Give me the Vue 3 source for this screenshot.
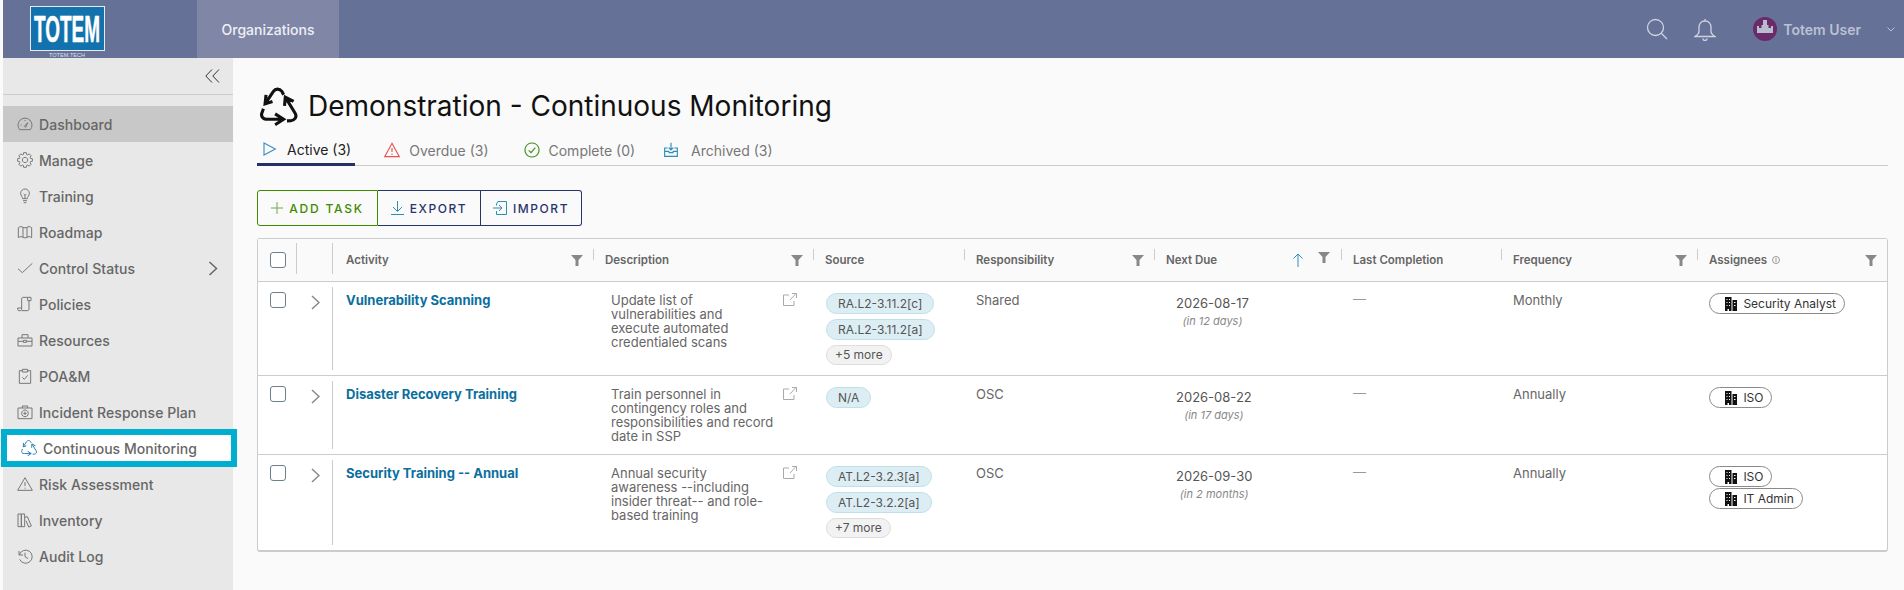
<script setup>
// 齿轮图标的轮廓按齿数算出来
const gearPath = () => {
  const pts = []
  for (let i = 0; i < 8; i++) {
    const a = (i / 8) * Math.PI * 2
    for (const [r, o] of [[8.6, -0.3], [11.2, -0.18], [11.2, 0.18], [8.6, 0.3]]) {
      pts.push((12 + r * Math.cos(a + o)).toFixed(1) + ' ' + (12 + r * Math.sin(a + o)).toFixed(1))
    }
  }
  return 'M' + pts.join('L') + 'zM12 8a4 4 0 1 0 .01 0z'
}

const icons = {
  gauge: 'M4 20.500A10.500 10.500 0 1 1 20 20.500zM11 15.500l5-5.500 -3 7zM5.500 13.500h1.500M12 6v1.500',
  gear: gearPath(),
  bulb: 'M8.500 16c0-3-3-4-3-8a6.500 6.500 0 0 1 13 0c0 4-3 5-3 8zM9 19h6M10 22h4M12 16v-5M10 9l2 2 2-2',
  map: 'M2 5.500c3-2 5-2 7-.5 1.500 1 4.500 1 6 0 2-1.500 4-1.500 7 .5v15c-3-2-5-2-7-.5-1.500 1-4.500 1-6 0-2-1.500-4-1.500-7 .5zM9 5v15M15 5v15',
  check: 'M1.500 13l6.500 6L23 5',
  scroll: 'M7 18V4c0-1.500 1-2 2-2h12v5h-5V3M7 18v2c0 1.500-1 2-2 2H3c-1 0-2-1-2-2v-2h6M7 22h9c1 0 2-1 2-2V7',
  case: 'M1.500 9h21v12h-21zM7.500 9V4h9v5M1.500 14h8M14.500 14h8M9.500 12.500h5v3h-5z',
  clip: 'M8 4H3.500v19h17V4H16M8 2h8v4H8zM8 14l3 3 5-6',
  camera: 'M1.500 6h21v16h-21zM8 6V3h8v3M12 9a5 5 0 1 0 .01 0zM12 11.500v5M9.500 14h5',
  recycle: 'M3.300 10.300 8.700 2.200C10 .3 12.600 .2 14.200 2.200L15.300 4.400M3.900 4.400 3.300 10.300 8.100 8.700M16.400 5.900 22.800 16.400C24.200 18.800 22.500 21 20 21.200L17.500 21.300M15.900 11.600 16.400 5.900 21.800 8.700M15.300 20.300H5C1.500 20.300 .2 18 1.500 15.500L2.200 13.500M9.800 16.800l5.500 3.500-5.500 3.500',
  warn: 'M12 2.500 23 21.500H1zM12 9v6M12 17.500v1.500',
  books: 'M1.500 3h5v19h-5zM6.500 3h5v19h-5zM11.500 8l4-1 6 14-4 1.500-4-9.500',
  history: 'M3 4.500v6h6M3.500 10.500A9.800 9.800 0 1 1 4 17M12 7v6l4.500 3'
}

const navItems = [
  { label: 'Dashboard', icon: 'gauge', active: true },
  { label: 'Manage', icon: 'gear' },
  { label: 'Training', icon: 'bulb' },
  { label: 'Roadmap', icon: 'map' },
  { label: 'Control Status', icon: 'check', more: true },
  { label: 'Policies', icon: 'scroll' },
  { label: 'Resources', icon: 'case' },
  { label: 'POA&M', icon: 'clip' },
  { label: 'Incident Response Plan', icon: 'camera' },
  { label: 'Continuous Monitoring', icon: 'recycle', marked: true },
  { label: 'Risk Assessment', icon: 'warn' },
  { label: 'Inventory', icon: 'books' },
  { label: 'Audit Log', icon: 'history' }
]

const tabs = [
  { label: 'Active (3)', cls: 'active', d: 'M3 3l17 9-17 9z', color: '#3d8fbf' },
  { label: 'Overdue (3)', cls: 'overdue', d: 'M12 2 23 22H1zM12 9v6M12 17.500v2', color: '#e8534a' },
  { label: 'Complete (0)', cls: 'complete', d: 'M12 1.500a10.500 10.500 0 1 0 .01 0zM7 12.500l3.500 3.500L17 8.500', color: '#3f8f1f' },
  { label: 'Archived (3)', cls: 'archived', d: 'M7 9H2.500v12.500h19V9H17M12 1v11M8.500 8.500 12 12l3.500-3.500M2.500 14h6.500M15 14h6.500M9 14v2h6v-2', color: '#2d8cb8' }
]

const columns = [
  { key: 'activity', label: 'Activity', filter: true },
  { key: 'description', label: 'Description', filter: true },
  { key: 'source', label: 'Source' },
  { key: 'responsibility', label: 'Responsibility', filter: true },
  { key: 'due', label: 'Next Due', filter: true, sorted: true },
  { key: 'last', label: 'Last Completion' },
  { key: 'frequency', label: 'Frequency', filter: true },
  { key: 'assignees', label: 'Assignees', filter: true, info: true }
]

const rows = [
  {
    id: 1,
    activity: 'Vulnerability Scanning',
    description: ['Update list of', 'vulnerabilities and', 'execute automated', 'credentialed scans'],
    source: ['RA.L2-3.11.2[c]', 'RA.L2-3.11.2[a]'],
    more: '+5 more',
    responsibility: 'Shared',
    due: '2026-08-17',
    dueIn: '(in 12 days)',
    frequency: 'Monthly',
    assignees: ['Security Analyst'],
    height: 94
  },
  {
    id: 2,
    activity: 'Disaster Recovery Training',
    description: ['Train personnel in', 'contingency roles and', 'responsibilities and record', 'date in SSP'],
    source: ['N/A'],
    responsibility: 'OSC',
    due: '2026-08-22',
    dueIn: '(in 17 days)',
    frequency: 'Annually',
    assignees: ['ISO'],
    height: 79
  },
  {
    id: 3,
    activity: 'Security Training -- Annual',
    description: ['Annual security', 'awareness --including', 'insider threat-- and role-', 'based training'],
    source: ['AT.L2-3.2.3[a]', 'AT.L2-3.2.2[a]'],
    more: '+7 more',
    responsibility: 'OSC',
    due: '2026-09-30',
    dueIn: '(in 2 months)',
    frequency: 'Annually',
    assignees: ['ISO', 'IT Admin'],
    height: 95
  }
]
</script>

<template>
  <div class="app">
    <header class="topbar">
      <div class="brand">
        <svg width="76" height="52" viewBox="0 0 76 52">
          <rect x="0.500" y="0.500" width="74" height="44" fill="#1272ad" stroke="#e6ebf2" />
          <text x="37" y="35.500" text-anchor="middle" textLength="66" lengthAdjust="spacingAndGlyphs" class="logo-big">TOTEM</text>
          <text x="37" y="51" text-anchor="middle" textLength="36" lengthAdjust="spacingAndGlyphs" class="logo-small">TOTEM.TECH</text>
        </svg>
      </div>
      <a class="org-tab">Organizations</a>
      <div class="top-actions">
        <svg class="top-icon search" width="22" height="22" viewBox="0 0 22 22">
          <circle cx="9.500" cy="9.500" r="8" />
          <path d="M15 15l6 6" />
        </svg>
        <svg class="top-icon bell" width="22" height="23" viewBox="0 0 22 23">
          <path d="M11 3c-4 0-6 3-6 6.500v4c0 2-1.500 3.500-4 5h20c-2.500-1.500-4-3-4-5v-4C17 6 15 3 11 3zM11 3V1M9 20.500a2 2 0 0 0 4 0" />
        </svg>
        <div class="user">
          <svg class="avatar" width="24" height="24" viewBox="0 0 24 24">
            <circle cx="12" cy="12" r="12" fill="#6b2a68" />
            <path d="M10 3h4v5h1.500v3H18v-2h2v7H4V9h2v2h2.500V8H10z" fill="#b9bdd0" />
          </svg>
          <span>Totem User</span>
          <svg class="caret" width="8" height="5" viewBox="0 0 8 5"><path d="M.5.5 4 4 7.500.5" /></svg>
        </div>
      </div>
    </header>

    <div class="layout">
      <aside class="sidebar">
        <div class="collapse">
          <svg width="15" height="14" viewBox="0 0 15 14"><path d="M7 .5.800 7 7 13.500M14 .5 7.800 7 14 13.500" /></svg>
        </div>
        <nav class="nav">
          <a
            v-for="item in navItems"
            :key="item.label"
            class="nav-item"
            :class="{ active: item.active, marked: item.marked }">
            <svg class="nav-icon" width="16" height="16" viewBox="0 0 24 24"><path :d="icons[item.icon]" /></svg>
            <span>{{ item.label }}</span>
            <svg v-if="item.more" class="nav-more" width="10" height="15" viewBox="0 0 10 15"><path d="M1.500 1 8.500 7.500 1.500 14" /></svg>
          </a>
        </nav>
      </aside>

      <main class="content">
        <div class="title-row">
          <svg class="title-icon" width="37" height="37" viewBox="0 0 24 24"><path :d="icons.recycle" /></svg>
          <h1>Demonstration - Continuous Monitoring</h1>
        </div>

        <div class="tabs">
          <a v-for="tab in tabs" :key="tab.label" class="tab" :class="tab.cls">
            <svg width="16" height="16" viewBox="0 0 24 24" :style="{ stroke: tab.color }"><path :d="tab.d" /></svg>
            <span>{{ tab.label }}</span>
          </a>
        </div>

        <div class="btn-group">
          <button class="btn add">
            <svg width="12" height="12" viewBox="0 0 12 12"><path d="M6 0v12M0 6h12" /></svg>
            Add Task
          </button>
          <button class="btn export">
            <svg width="13" height="14" viewBox="0 0 13 14"><path d="M6.500 0v10M2 6l4.500 4.500L11 6M0 13.500h13" /></svg>
            Export
          </button>
          <button class="btn import">
            <svg width="14" height="14" viewBox="0 0 14 14"><path d="M5 .5h8.500v13H3.500V10M3.500 4.500V3L5 .5M0 7h9M6 4l3 3-3 3" /></svg>
            Import
          </button>
        </div>

        <div class="grid">
          <table>
            <colgroup>
              <col style="width: 39px" />
              <col style="width: 36px" />
              <col style="width: 260px" />
              <col style="width: 220px" />
              <col style="width: 151px" />
              <col style="width: 190px" />
              <col style="width: 187px" />
              <col style="width: 160px" />
              <col style="width: 196px" />
              <col style="width: 190px" />
            </colgroup>
            <thead>
              <tr>
                <th class="sel"><span class="box"></span></th>
                <th class="exp"></th>
                <th v-for="col in columns" :key="col.key" :class="col.key">
                  <div class="th-inner">
                    <span>{{ col.label }}</span>
                    <svg v-if="col.info" class="info" width="8" height="8" viewBox="0 0 8 8"><circle cx="4" cy="4" r="3.500" /><path d="M4 2v4" /></svg>
                    <svg v-if="col.sorted" class="sort" width="10" height="14" viewBox="0 0 10 14"><path d="M5 14V1M.5 5.500 5 1l4.500 4.500" /></svg>
                    <svg v-if="col.filter" class="funnel" :class="{ up: col.sorted }" width="12" height="11" viewBox="0 0 12 11"><path d="M0 0h12L7.500 5v6h-3V5z" /></svg>
                  </div>
                </th>
              </tr>
            </thead>
            <tbody>
              <tr v-for="row in rows" :key="row.id" :style="{ height: row.height + 'px' }">
                <td class="sel"><span class="box"></span></td>
                <td class="exp">
                  <svg width="9" height="15" viewBox="0 0 9 15"><path d="M1 1l7 6.500L1 14" /></svg>
                </td>
                <td class="name"><a>{{ row.activity }}</a></td>
                <td class="desc">
                  <p v-for="line in row.description" :key="line">{{ line }}</p>
                  <svg class="ext" width="14" height="13" viewBox="0 0 14 13"><path d="M6 2H.5v10.500h10.500V8M7 7l6-6.500M9 .5h4.500V5" /></svg>
                </td>
                <td class="chips">
                  <span v-for="code in row.source" :key="code" class="chip">{{ code }}</span>
                  <span v-if="row.more" class="chip more">{{ row.more }}</span>
                </td>
                <td>{{ row.responsibility }}</td>
                <td class="due">
                  <div class="due-inner">
                    <div class="date">{{ row.due }}</div>
                    <em>{{ row.dueIn }}</em>
                  </div>
                </td>
                <td class="dash">—</td>
                <td>{{ row.frequency }}</td>
                <td class="people">
                  <span v-for="person in row.assignees" :key="person" class="person">
                    <svg width="14" height="14" viewBox="0 0 14 14"><path fill-rule="evenodd" d="M1 0h6.500v14H5v-2H3.500v2H1zM2.500 2v1h1V2zM5 2v1h1V2zM2.500 5v1h1V5zM5 5v1h1V5zM2.500 8v1h1V8zM5 8v1h1V8zM8.500 3H13v11H8.500zM10 5v1h1.500V5zM10 8v1h1.500V8z" /></svg>
                    {{ person }}
                  </span>
                </td>
              </tr>
            </tbody>
          </table>
        </div>
      </main>
    </div>
  </div>
</template>

<style scoped>
.app {
  height: 590px;
  padding-left: 3px;
  box-sizing: border-box;
  overflow: hidden;
  background: #fafafa;
  font-family: Inter, "Open Sans", sans-serif;
  color: #666;
  display: flex;
  flex-direction: column;
}
svg {
  fill: none;
  stroke: currentColor;
  stroke-width: 1;
  display: block;
  flex: none;
}

/* 顶栏 */
.topbar {
  height: 58px;
  flex: none;
  background: #657197;
  display: flex;
  align-items: stretch;
}
.brand {
  width: 194px;
  padding: 6px 0 0 27px;
  box-sizing: border-box;
}
.logo-big {
  font: 700 37px "Liberation Sans", sans-serif;
  fill: #fff;
  stroke: #fff;
  stroke-width: 0.500;
}
.logo-small {
  font: 400 6px "Liberation Sans", sans-serif;
  fill: #dfe3ec;
  stroke: none;
}
.org-tab {
  width: 142px;
  background: #8086a6;
  color: #eef0f5;
  font-size: 14px;
  font-weight: 500;
  display: flex;
  align-items: center;
  justify-content: center;
}
.top-actions {
  margin-left: auto;
  display: flex;
  align-items: center;
  color: #cfd3e0;
}
.top-icon {
  stroke-width: 1.300;
}
.search {
  margin-right: 26px;
}
.user {
  margin-left: 37px;
  display: flex;
  align-items: center;
  font-size: 14px;
  font-weight: 600;
  color: #bcc1d3;
}
.avatar {
  stroke: none;
  margin-right: 6px;
}
.caret {
  margin: 0 9px 0 26px;
}

/* 侧栏 */
.layout {
  flex: 1;
  display: flex;
  min-height: 0;
}
.sidebar {
  width: 230px;
  flex: none;
  background: #e8e8e8;
}
.collapse {
  height: 36px;
  border-bottom: 1px solid #ccc;
  display: flex;
  align-items: center;
  justify-content: flex-end;
  padding-right: 13px;
  color: #333;
}
.nav {
  padding-top: 11px;
}
.nav-item {
  height: 36px;
  display: flex;
  align-items: center;
  padding-left: 14px;
  font-size: 14px;
  font-weight: 500;
  letter-spacing: 0.050px;
  color: #666;
  box-sizing: border-box;
}
.nav-item.active {
  background: #c8c8c8;
}
.nav-item.marked {
  height: 38px;
  margin: -1px -4px -1px -2px;
  border: 6px solid #00aecf;
  background: #fff;
}
.nav-icon {
  margin-right: 6px;
  color: #777;
  stroke-width: 1.500;
}
.marked .nav-icon {
  color: #2b86b0;
}
.nav-more {
  margin-left: auto;
  margin-right: 15px;
  stroke-width: 1.500;
}

/* 主内容 */
.content {
  flex: 1;
  min-width: 0;
  padding: 0 16px 0 24px;
}
.title-row {
  height: 72px;
  padding-top: 24px;
  box-sizing: border-box;
  display: flex;
  align-items: center;
  color: #111;
}
.title-icon {
  margin: 0 11px 0 3px;
  stroke-width: 2;
  overflow: visible;
}
h1 {
  margin: 0;
  font-size: 28px;
  font-weight: 400;
  color: #111;
}
.tabs {
  height: 36px;
  border-bottom: 1px solid #ccc;
  box-sizing: border-box;
  display: flex;
  align-items: flex-start;
}
.tab {
  height: 36px;
  padding: 4px 4px 0 5px;
  display: flex;
  align-items: center;
  gap: 9px;
  font-size: 14px;
  color: #777;
  box-sizing: border-box;
}
.tab svg {
  stroke-width: 1.700;
}
.tab.active {
  color: #222;
  border-bottom: 3px solid #25306a;
  padding-top: 5px;
}
.tab.overdue {
  margin-left: 24px;
}
.tab.complete {
  margin-left: 26px;
}
.tab.archived {
  margin-left: 19px;
  gap: 12px;
}
.btn-group {
  margin-top: 24px;
  display: flex;
  height: 36px;
}
.btn {
  appearance: none;
  background: transparent;
  border: 1px solid #28356c;
  border-left-width: 0;
  height: 36px;
  padding: 0;
  display: flex;
  align-items: center;
  justify-content: center;
  gap: 6px;
  font-family: inherit;
  font-size: 12px;
  font-weight: 500;
  letter-spacing: 1.550px;
  text-transform: uppercase;
  color: #28356c;
}
.btn.add {
  width: 121px;
  border: 1px solid #3f8a00;
  border-radius: 3px 0 0 3px;
  color: #3f8a00;
  letter-spacing: 1.800px;
}
.btn.add svg {
  color: #6fa84a;
}
.btn.export {
  width: 103px;
}
.btn.export svg,
.btn.import svg {
  color: #2d8cb8;
}
.btn.import {
  width: 101px;
  border-radius: 0 3px 3px 0;
}

/* 表格 */
.grid {
  margin-top: 12px;
  width: 1631px;
  border: 1px solid #ccc;
  border-bottom-width: 2px;
  border-radius: 3px;
  background: #fff;
  box-sizing: border-box;
}
table {
  width: 100%;
  table-layout: fixed;
  border-collapse: separate;
  border-spacing: 0;
  font-size: 13px;
}
th {
  height: 42px;
  padding: 0;
  background: #fafafa;
  border-bottom: 1px solid #ccc;
  font-size: 11.500px;
  font-weight: 600;
  color: #666;
  text-align: left;
  position: relative;
}
th:not(.sel):not(.exp)::before {
  content: '';
  position: absolute;
  left: 0;
  top: 10px;
  height: 11px;
  width: 1px;
  background: #ccc;
}
th.activity::before {
  display: none;
}
th.sel::after,
th.exp::after {
  content: '';
  position: absolute;
  right: 0;
  top: 4px;
  height: 31px;
  width: 1px;
  background: #ccc;
}
.th-inner {
  display: flex;
  align-items: center;
  padding: 0 10px 0 12px;
  height: 30px;
}
th.activity .th-inner {
  padding-left: 13px;
}
th.due .th-inner {
  padding-right: 11px;
}
.funnel {
  margin-left: auto;
  fill: #888;
  stroke: none;
}
.funnel.up {
  margin-left: 15px;
  position: relative;
  top: -3px;
}
.sort {
  margin-left: auto;
  color: #2f8fc0;
}
.info {
  margin-left: 5px;
  color: #999;
}
td {
  padding: 11px 12px 0;
  vertical-align: top;
  border-bottom: 1px solid #ccc;
  line-height: 14px;
  color: #666;
}
tbody tr:last-child td {
  border-bottom: 0;
}
th.sel,
td.sel {
  padding: 0 0 0 12px;
}
th.sel {
  vertical-align: middle;
}
td.sel {
  padding-top: 10px;
}
.box {
  display: block;
  width: 16px;
  height: 16px;
  border: 1px solid #6c7f8a;
  border-radius: 3px;
  box-sizing: border-box;
  background: #fff;
}
td.exp {
  padding: 13px 0 0 14px;
  position: relative;
  color: #888;
}
td.exp svg {
  stroke-width: 1.500;
}
td.exp::after {
  content: '';
  position: absolute;
  right: 0;
  top: 5px;
  bottom: 5px;
  width: 1px;
  background: #ccc;
}
td.name {
  padding-left: 13px;
}
td.name a {
  color: #0a6f9e;
  font-weight: 700;
  font-size: 13px;
}
td.desc {
  position: relative;
  padding-left: 18px;
  padding-right: 30px;
}
td.desc p {
  margin: 0;
  white-space: nowrap;
}
.ext {
  position: absolute;
  right: 16px;
  top: 11px;
  color: #aaa;
}
td.chips {
  padding-top: 11px;
  padding-left: 13px;
}
.chip {
  display: table;
  height: 21px;
  line-height: 19px;
  padding: 0 11px;
  margin-bottom: 5px;
  box-sizing: border-box;
  border: 1px solid #bfe0ea;
  border-radius: 11px;
  background: #dcedf4;
  font-size: 12px;
  color: #555;
}
.chip.more {
  height: 20px;
  line-height: 18px;
  background: #f2f2f2;
  border-color: #ddd;
  padding: 0 8px;
}
td.due {
  padding-top: 14px;
}
.due-inner {
  display: inline-block;
  text-align: center;
  margin-left: 10px;
}
.date {
  color: #555;
}
.due-inner em {
  display: block;
  margin-top: 4px;
  font-size: 11px;
  color: #888;
}
td.dash {
  padding-top: 10px;
  color: #999;
}
td.people {
  padding-top: 11px;
}
.person {
  display: table;
  height: 21px;
  margin-bottom: 1px;
  padding: 0 8px 0 14px;
  border: 1px solid #8a8a8a;
  border-radius: 11px;
  box-sizing: border-box;
  font-size: 12px;
  line-height: 19px;
  color: #333;
  white-space: nowrap;
}
.person svg {
  display: inline-block;
  vertical-align: -3px;
  margin-right: 2px;
  fill: #111;
  stroke: none;
}
</style>

<style>
html,
body {
  margin: 0;
  background: #fafafa;
  overflow: hidden;
}
</style>
